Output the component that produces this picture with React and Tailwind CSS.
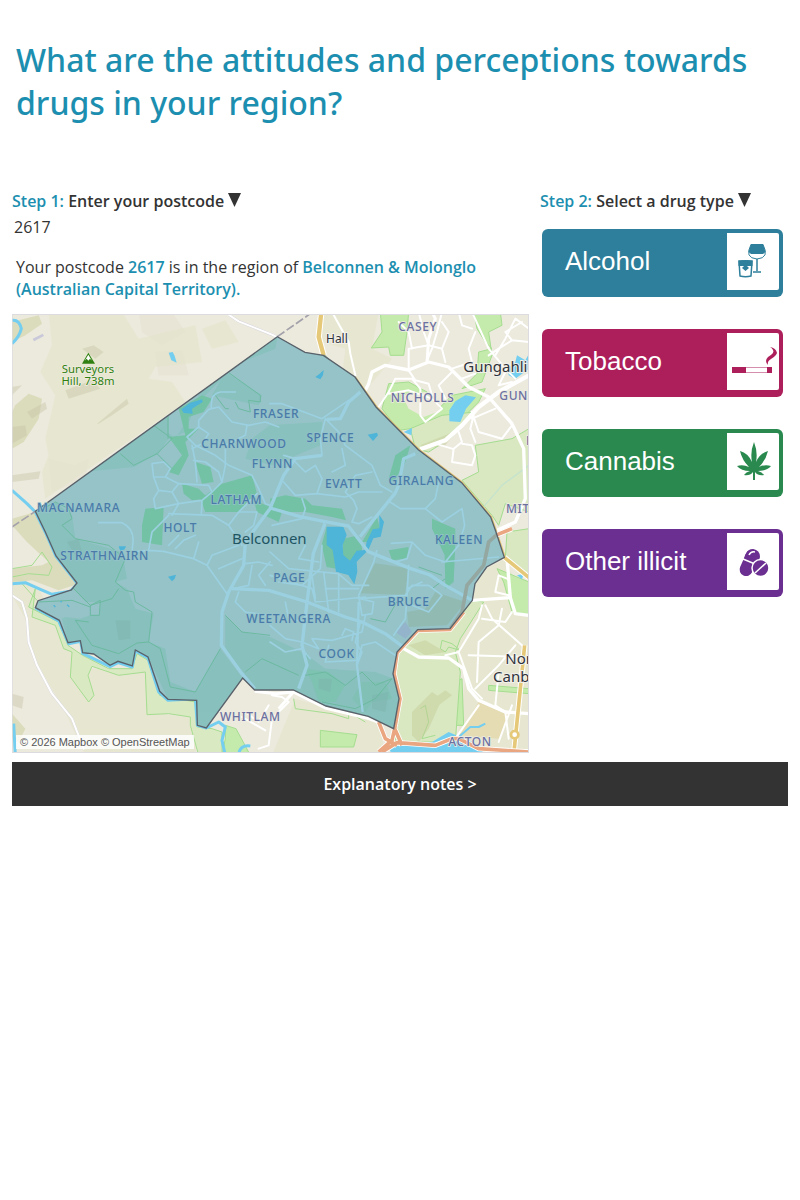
import React, { useState } from 'react'

const regionPath =
  'M70 598 L796 74 L879 121 L934 130 L1029 195 L1092 285 L1219 413 L1349 512 L1436 615 L1452 660 L1477 736 L1424 765 L1389 815 L1381 865 L1314 950 L1217 953 L1155 1020 L1143 1085 L1161 1160 L1145 1250 L1069 1213 L942 1182 L844 1134 L728 1134 L692 1098 L583 1248 L556 1240 L554 1165 L468 1162 L443 1138 L408 1035 L370 1014 L361 1062 L318 1048 L294 1060 L245 1026 L212 1022 L205 986 L168 992 L142 925 L70 887 L78 866 L178 834 L195 813 L132 732 L100 660 Z'

const suburbs = [
  ['CASEY', 1217, 57], ['NICHOLLS', 1232, 269], ['GUNGAHLIN', 1462, 264, 'start'],
  ['MITCHELL', 1482, 602, 'start'], ['WHITLAM', 715, 1227], ['ACTON', 1374, 1302], ['FORDE', 1542, 398, 'start'],
]

const innerSuburbs = [
  ['FRASER', 792, 317], ['SPENCE', 955, 390], ['CHARNWOOD', 696, 407], ['FLYNN', 781, 467],
  ['EVATT', 995, 529], ['GIRALANG', 1228, 520], ['LATHAM', 673, 577], ['MACNAMARA', 200, 601],
  ['HOLT', 505, 661], ['STRATHNAIRN', 278, 745], ['KALEEN', 1341, 697], ['PAGE', 832, 810],
  ['BRUCE', 1190, 882], ['WEETANGERA', 830, 932], ['COOK', 974, 1038],
]

// land, woodland and parks outside of the region
const Land = () => <>
  <rect x="0" y="0" width="1551" height="1330" fill="#ece9dd" />
  <g fill="#e7e7d1">
    <path d="M110 0 L330 0 L380 80 L550 40 L570 150 L430 165 L410 200 L480 210 L520 270 L100 560 L90 480 L110 430 L100 380 L130 250 L85 180 L120 100 Z" />
    <path d="M570 50 L640 25 L680 90 L600 110 Z" />
    <path d="M930 0 L1100 0 L1080 110 L1140 140 L1040 260 L990 190 L1000 110 L930 90 Z" />
    <path d="M240 1070 L400 1080 L410 1200 L560 1220 L550 1330 L220 1330 L150 1180 L70 1050 L40 920 L0 850 L0 780 L80 830 L170 1000 Z" />
    <path d="M850 1160 L1100 1230 L1120 1330 L780 1330 Z" />
    <path d="M1400 780 L1480 740 L1551 900 L1551 1330 L1330 1330 L1360 1100 L1320 1000 Z" />
  </g>
  <g fill="#d5d7ae" opacity=".7">
    <path d="M10 280 L50 245 L90 260 L80 320 L35 390 L0 410 L0 300 Z" />
    <path d="M0 30 L80 10 L90 35 L40 70 L0 90 Z" />
    <path d="M0 620 L70 600 L130 730 L200 815 L140 835 L60 805 L0 810 L0 770 L90 760 L110 750 L45 690 L0 640 Z" />
    <path d="M0 1205 L40 1250 L20 1290 L0 1280 Z" />
  </g>
  <g fill="#c9c8aa" opacity=".45">
    <path d="M45 300 L100 270 L105 290 L60 320 Z" />
    <path d="M160 235 L240 205 L265 230 L170 260 Z" />
    <path d="M255 335 L345 260 L350 275 L300 310 L260 335 Z" />
    <path d="M0 345 L40 340 L45 370 L0 395 Z" />
    <path d="M210 110 L245 100 L275 120 L250 140 Z" />
    <path d="M0 490 L85 478 L80 500 L0 510 Z" />
    <path d="M0 225 L30 220 L0 250 Z" />
    <path d="M0 1145 L35 1155 L30 1190 L0 1180 Z" />
  </g>
  <g fill="#e3e0cc" opacity=".4">
    <path d="M380 0 L480 0 L520 60 L450 100 L390 60 Z" />
    <path d="M430 120 L510 115 L530 190 L440 190 Z" />
    <path d="M110 440 L190 460 L230 440 L220 500 L120 540 Z" />
  </g>
  {/* river corridor to the west */}
  <path d="M70 830 L50 885 L140 930 L168 1000 L212 1030 L290 1070 L360 1070 L375 1025 L408 1045 L443 1150 L550 1170 L556 1245 L600 1250 L630 1260 L630 1330 L560 1330 L535 1240 L535 1215 L470 1205 L405 1208 L400 1080 L320 1090 L240 1063 L228 1090 L246 1150 L230 1170 L175 1095 L180 1020 L155 1010 L130 940 L60 915 Z" fill="#d9e9c2" stroke="#a5dd90" strokeWidth="3" />
  <path d="M0 795 L50 785 L110 790 L120 765 L90 720 L60 760 L0 770 M30 815 L75 865" fill="none" stroke="#a5dd90" strokeWidth="3" />
  <g fill="#c5ebac" stroke="#a5dd90" strokeWidth="3">
    <path d="M1105 0 L1190 0 L1185 60 L1175 130 L1135 130 L1130 105 L1078 108 L1110 60 Z" />
    <path d="M1385 0 L1465 0 L1470 40 L1430 60 L1440 130 L1410 210 L1350 230 L1395 185 L1400 120 L1440 110 L1420 90 L1395 50 Z" />
    <path d="M1130 215 L1190 210 L1245 240 L1280 290 L1320 250 L1420 230 L1400 270 L1340 330 L1160 355 L1110 290 Z" />
    <path d="M640 1240 L672 1250 L715 1330 L630 1330 L640 1280 Z" />
    <path d="M925 1255 L1035 1268 L1025 1305 L925 1305 Z" />
    <path d="M1455 770 L1551 810 L1551 910 L1500 900 L1475 810 Z" />
    <path d="M1430 1120 L1551 1130 L1551 1145 L1430 1135 Z" />
    <path d="M1270 1140 L1350 1100 L1355 1240 L1270 1240 Z" />
  </g>
  <path d="M1170 250 L1240 240 L1290 295 L1235 315 L1190 290 Z" fill="#ece9dd" />
  <g fill="#d9e8c1" stroke="#a5dd90" strokeWidth="3">
    <path d="M1195 350 L1290 310 L1390 300 L1320 375 L1250 420 L1210 410 Z" />
    <path d="M1390 400 L1500 380 L1551 350 L1551 600 L1480 575 L1460 640 L1440 610 L1350 505 L1400 480 Z" />
    <path d="M1415 870 L1380 865 L1315 955 L1220 960 L1160 1025 L1146 1085 L1165 1160 L1150 1290 L1330 1290 L1345 1080 L1330 1020 L1345 980 Z" />
    <path d="M1485 660 L1551 650 L1551 800 L1480 740 Z" />
  </g>
  <g fill="none" stroke="#a5dd90" strokeWidth="3">
    <path d="M845 1160 L850 1190 L960 1205 L1010 1220 L1010 1200 L1060 1230" />
    <path d="M1290 985 L1320 995 L1345 1015 L1310 1005 L1300 1020 L1285 1010 Z" />
    <path d="M1225 1190 L1240 1180 L1250 1230 L1230 1280 L1270 1270" />
  </g>
  <g fill="#c4ca96" opacity=".45">
    <path d="M1190 1000 L1240 985 L1300 1020 L1240 1030 Z" />
    <path d="M1200 1200 L1260 1140 L1290 1160 L1250 1250 L1220 1290 L1200 1270 Z" />
    <path d="M1265 1160 L1300 1135 L1320 1150 L1280 1180 Z" />
    <path d="M1225 400 L1300 370 L1340 350 L1300 400 L1240 410 Z" />
  </g>
  <path d="M1400 1170 L1490 1210 L1460 1280 L1340 1270 Z" fill="#e5dcb4" />
  <path d="M62 80 L92 65 L96 72 L66 88 Z" fill="#c9c9da" />
  {/* water */}
  <g fill="#73cef0">
    <path d="M1312 328 L1312 295 L1330 268 L1360 250 L1392 256 L1362 290 L1345 330 Z" />
    <path d="M1488 170 L1510 150 L1515 130 L1540 145 L1551 125 L1551 170 L1510 200 L1490 190 Z" />
    <path d="M1175 360 L1200 348 L1198 370 Z" />
    <path d="M470 122 L482 120 L488 132 L494 152 L478 145 Z" />
    <path d="M1130 1305 L1260 1290 L1310 1260 L1380 1290 L1420 1310 L1400 1330 L1140 1330 Z" />
    <path d="M1515 790 L1535 785 L1530 802 Z" />
  </g>
  <g fill="none" stroke="#73cef0" strokeWidth="9" strokeLinejoin="round">
    <path d="M0 25 Q22 22 28 50 Q22 75 0 95" />
    <path d="M0 535 L45 575 L70 600 L102 665 L132 733 L196 815 L175 838 L120 847 L80 830 L40 812 L0 815" />
    <path d="M70 888 L140 927 L170 995 L206 988 L212 1024 L294 1064 L318 1052 L361 1065 L370 1016 L408 1038 L440 1140 L468 1165 L550 1160 L556 1240 L583 1248 L620 1230 L640 1245 L630 1285 L640 1330 M680 1325 Q685 1298 715 1302" />
    <path d="M5 1235 L10 1330" />
    <path d="M1340 1275 L1375 1245 L1400 1245 L1420 1235" strokeWidth="6" />
    <path d="M1410 590 L1470 520 L1551 460" stroke="#c5e3cd" strokeWidth="4" />
  </g>
</>

// everything that shows through the shaded region
const InnerFeatures = () => <>
  <g fill="#88c1bd">
    <path d="M0 500 L340 400 L470 310 L470 375 L440 425 L370 460 L320 410 L340 380 L430 330 L490 380 L560 270 L700 130 L796 74 L790 110 L640 170 L560 250 L520 360 L470 380 L430 430 L365 465 Z" />
    <path d="M70 598 L130 570 L180 610 L190 680 L330 720 L345 800 L310 810 L345 830 L370 890 L425 905 L410 990 L460 1010 L475 1110 L550 1140 L690 1095 L583 1248 L556 1240 L554 1165 L468 1162 L408 1035 L370 1014 L361 1062 L294 1060 L212 1022 L168 992 L150 920 L230 880 L200 840 L230 880 L165 810 Z" />
    <path d="M625 1010 L550 1140 L583 1248 L692 1098 Z" />
    <path d="M640 910 L690 960 L774 975 L850 1010 L885 1030 L940 1070 L1090 1080 L1145 1100 L1161 1160 L1145 1250 L942 1182 L844 1134 L728 1134 L640 1020 Z" />
    <path d="M640 180 L750 250 L740 280 L600 250 Z" />
    <path d="M774 340 L930 330 L925 400 L780 460 L700 440 L720 380 Z" />
  </g>
  <g fill="#74c2a5">
    <path d="M500 290 L570 250 L600 260 L575 300 L530 315 L530 350 L560 350 L520 390 L530 430 L500 490 L470 480 L510 430 L470 375 L520 370 Z" />
    <path d="M550 450 L595 465 L605 510 L570 515 Z" />
    <path d="M510 515 L560 530 L590 560 L540 565 L515 545 Z" />
    <path d="M565 560 L630 515 L720 490 L735 545 L680 600 L580 600 Z" />
    <path d="M400 590 L455 585 L450 700 L390 690 L390 640 Z" />
    <path d="M774 560 L820 550 L880 560 L900 580 L990 590 L1002 625 L960 615 L880 600 L780 600 Z" />
    <path d="M1130 500 L1150 430 L1195 400 L1180 450 L1145 510 Z" />
    <path d="M1260 620 L1330 650 L1330 700 L1325 810 L1300 830 L1298 730 L1260 650 Z" />
    <path d="M1130 715 L1190 705 L1185 740 L1140 745 Z" />
    <path d="M720 545 L740 570 L810 600 L800 630 L735 600 Z" />
    <path d="M929 699 L944 644 L965 714 L972 770 L944 765 Z" />
    <path d="M994 680 L1030 672 L1048 690 L1050 715 L1014 750 L990 735 Z" />
    <path d="M1050 690 L1095 615 L1104 650 L1070 690 Z" />
    <path d="M880 1070 L950 1080 L1000 1120 L970 1170 L920 1170 L900 1110 Z" opacity=".4" />
    <path d="M1050 1110 L1120 1110 L1140 1160 L1080 1170 L1060 1200 L1020 1160 Z" opacity=".35" />
  </g>
  <g fill="#91bab3">
    <path d="M1089 754 L1189 769 L1179 849 L1044 844 Z" />
    <path d="M1270 840 L1360 870 L1305 940 L1190 945 L1185 900 L1240 890 Z" />
  </g>
  <path d="M1150 960 L1180 930 L1200 960 L1180 980 Z" fill="#94b4cb" />
  <path d="M80 880 L120 860 L200 870 L265 870 L262 910 L235 910 L205 920 L160 915 Z" fill="#95c3c8" />
  <g fill="#7bafa9" opacity=".35">
    <path d="M310 925 L355 925 L355 980 L320 985 Z" />
    <path d="M920 1100 L960 1100 L955 1140 L920 1130 Z" />
    <path d="M165 690 L200 680 L215 740 L190 730 Z" />
    <path d="M1080 1150 L1130 1140 L1120 1200 L1080 1190 Z" />
  </g>
  <g fill="none" stroke="#6cb9a0" strokeWidth="3">
    <path d="M650 182 L745 250 L745 270 L710 265 L715 300 L680 290 L670 270 M610 250 L640 290 L650 290" />
    <path d="M325 425 L365 460 L435 425 L480 380 L425 340 M435 425 L480 470 M468 310 L468 380" />
    <path d="M75 600 L130 570 L170 590 L180 620 L150 640 L190 680 L290 700 L340 740 L310 810 L340 835 L365 840 L370 870 L420 900 L410 990 M410 990 L375 993 L320 1025 L240 1000 L190 925 L230 930 M410 990 L445 1010 L475 1125 L550 1140 L625 1010 M165 810 L235 880 L300 860 L320 830" />
    <path d="M235 880 L265 865 L262 910 L235 910 Z" />
    <path d="M80 870 L180 865 L235 885 M640 910 L690 960 L774 970 M1075 920 L1120 930 L1160 860 M885 1025 L880 1090 L940 1080 L1000 1120 L1050 1080 L1090 1120 L1140 1100 L1090 1160 L1030 1190 L930 1170 M700 1080 L750 1040 L860 1090" />
    <path d="M1220 765 L1290 790 M1260 830 L1300 800" />
  </g>
  <g fill="#4eb4d8">
    <path d="M508 292 L535 272 L570 262 L572 270 L540 290 L542 305 L515 303 Z" />
    <path d="M910 195 L922 186 L935 174 L933 190 L925 202 Z" />
    <path d="M1067 368 L1095 362 L1098 370 L1083 387 Z" />
    <path d="M944 644 L994 644 L1004 669 L992 699 L994 729 L1014 746 L1034 716 L1059 714 L1064 689 L1082 652 L1102 649 L1102 609 L1116 629 L1106 674 L1084 679 L1069 714 L1034 749 L1036 779 L1027 817 L1009 789 L972 779 L962 714 L944 699 Z" />
    <path d="M320 703 L342 703 L338 712 L325 718 Z" />
    <path d="M468 794 L492 788 L488 800 L480 808 Z" />
  </g>
  <path d="M125 880 L130 885 M145 870 L150 868 M165 878 L172 884" stroke="#4eb4d8" strokeWidth="4" />
  <g fill="none" stroke="#9bd0e1" strokeWidth="5" strokeLinejoin="round" strokeLinecap="round">
    <path d="M598 287 Q595 245 625 240 L670 240 M590 292 L620 285 L660 330 L710 340 L760 330 L800 345 M590 292 L560 325 L560 345 L525 375 L550 400 L610 430 L650 460 L720 490 L740 530 L760 575 L774 580" />
    <path d="M560 345 L590 365 L570 395 L540 410 M705 340 L700 370 L640 400 L640 460 L630 510 L600 540 L570 565 L500 575 L430 590 L425 560 L440 535 L425 495 L420 455 L455 450 L475 470 L460 495 L430 495 M540 400 L550 450 L555 510 M545 445 L580 450 L620 480 L630 510 M460 495 L500 515 L590 520 L600 540 M500 515 L480 540 L500 575 L480 610 M440 535 L480 540 M570 565 L568 605" />
    <path d="M774 275 L810 275 L930 320 L1010 265 M940 320 L925 380 L930 430 L850 440 L815 430 M940 320 L980 360 L1000 400 L1080 460 L1105 520 L1140 540 M990 410 L1000 460 L960 480 M1080 480 L1030 490 L1000 540 L1025 565 L1035 590 L1020 630 L1040 635 L1080 615 M850 450 L880 480 L910 460 L930 500 L915 545 L850 550 L815 510 M915 545 L1000 555 L1040 540 L1110 540" />
    <path d="M260 632 L330 632 Q370 650 362 700 L360 720 L410 715 M410 715 L420 660 L470 610 M470 700 L500 670 M410 715 L455 718 L545 740 L585 760 L645 845 M490 710 L515 685 L550 670 M585 760 L600 730 L680 700 M620 770 L690 740 M545 740 L560 690 M700 755 L740 750 L780 760 M665 830 L710 820 L720 760 M774 750 L740 790 L760 820 M680 840 L670 870 L700 900 L770 910" />
    <path d="M470 605 L600 610 L650 640 L690 700 M650 640 L680 600 L735 600 L725 640 L700 660 M735 545 L700 580 L680 600 M880 590 L870 620 L780 640 M870 560 L880 590" />
    <path d="M1134 570 L1165 590 L1240 590 L1290 630 L1350 590 L1358 640 L1340 700 M1280 510 L1270 560 L1240 590 M1138 694 L1200 690 L1240 730 L1300 750 L1340 700 M1200 692 L1185 740 L1150 750 M1290 750 L1460 735" />
    <path d="M774 720 L830 770 L930 780 L979 785 L1020 820 L1070 820 M774 790 L900 830 L910 870 L1060 855 M900 790 L910 860 M935 780 L950 900 M980 785 L980 900 M940 830 L1040 830 M1094 716 L1085 750 L1040 850 L1050 910 L1080 905 L1085 870 L1045 860 M1040 860 L1180 850 L1200 820 L1250 820 L1290 850 L1250 900 L1200 880 M1190 760 L1185 850 L1180 920 L1145 970 M930 700 L925 770 L870 820 L800 810 M880 700 L860 740 L920 750 M1185 830 L1230 810" />
    <path d="M774 940 L820 980 L870 990 L920 1010 L900 980 L960 985 L1050 960 L1060 910 M1045 930 L1030 990 L1050 1020 L1035 1060 L1050 1000 L1090 990 L1150 1030 M990 970 L1000 950 L1025 960 L1020 985 M950 1000 L940 1050 L1030 1045 M774 990 L820 1020 L870 1010 L895 1040 M820 870 L830 920 L880 930" />
  </g>
  <g fill="none" stroke="#9bd0e1" strokeWidth="10" strokeLinejoin="round">
    <path d="M1045 240 L1010 270 L985 320 L945 322 M930 430 L850 440 L815 490 L774 590 L700 690 L695 760 L650 840 L630 900 L628 1000 L690 1085 L728 1130" />
    <path d="M774 588 L864 614 L939 629 L1009 642 L1069 719 L1194 769 L1254 789 L1300 820 L1381 865" />
    <path d="M1210 425 L1175 440 L1160 520 L1149 544 L1084 624 L1044 674" />
    <path d="M660 830 L770 835 L885 870 L1000 915 L1050 930 L1120 965 L1180 1010" />
    <path d="M939 634 L904 724 L884 880 L870 1000 L885 1060 L860 1130" />
  </g>
  <path d="M1040 870 L1035 1060 L1052 1200" fill="none" stroke="#9bd0e1" strokeWidth="7" />
  <path d="M1475 650 L1430 690 L1415 760 L1365 820 L1350 900 L1315 950" fill="none" stroke="#94a7a0" strokeWidth="11" />
</>

const OuterRoads = () => <>
  <g fill="none" stroke="#d6d4dd" strokeWidth="8" strokeLinejoin="round">
    <path d="M650 8 L680 28 L780 68 L800 78" />
    <path d="M0 850 L30 870 L45 920 L50 990 L75 1060 L120 1145 L180 1220 L215 1310" />
  </g>
  <g fill="none" stroke="#fff" strokeWidth="6" strokeLinejoin="round" strokeLinecap="round">
    <path d="M650 8 L680 28 L780 68 L800 78 M0 850 L30 870 L45 920 L50 990 L75 1060 L120 1145 L180 1220 L215 1310" />
    <path d="M960 0 L1010 90 L1015 125 L1030 190 M1100 285 L1130 240 L1150 200 L1200 200 L1225 230 L1225 310 L1240 330 L1290 290 L1260 260 L1190 235 L1130 245 M1190 175 L1210 205 L1250 215 L1260 250 M1190 170 L1190 110 L1250 100 L1290 110 L1300 150 M1290 0 L1275 60 L1260 110 L1245 145 M1220 0 L1235 60 L1250 100 M1200 110 L1190 60 L1160 30 M1290 110 L1310 60 L1290 30 M1340 0 L1350 40 L1380 50 M1320 170 L1380 150 L1370 110 L1390 60 M1320 180 L1280 220 L1300 260 M1350 200 L1390 185 M1380 0 L1430 110 L1480 170 L1510 200 M1430 130 L1460 110 L1500 85 L1551 90 M1450 130 L1480 80 L1510 20 L1551 50 M1500 85 L1480 60 L1530 30 M1480 180 L1460 220 L1500 210" />
    <path d="M1340 360 L1350 390 L1325 410 L1320 450 L1380 460 L1390 430 L1380 400 L1350 395 M1270 395 L1320 410 M1380 300 L1400 360 L1470 380 L1500 340 L1490 320 M1385 310 L1375 350 L1390 390 M1450 290 L1380 320" />
    <path d="M1410 880 L1400 920 L1340 1020 L1380 1130 L1410 1160 M1420 880 L1440 920 L1530 1000 M1410 920 L1480 930 L1500 900 M1470 890 L1460 940 L1400 990 L1395 1110 M1370 1030 L1551 1035 M1340 1020 L1300 1030 M1390 1130 L1460 1060 L1510 1000 M1460 1080 L1450 1180 L1480 1200 L1490 1280 M1400 1180 L1330 1280 M1500 1180 L1460 1290 M1450 840 L1460 790 L1485 800 M1450 840 L1490 850" />
    <path d="M780 1150 L810 1155 L830 1170 L780 1220 L770 1300 L740 1310 M700 1200 L740 1230 L770 1180 M690 1215 L760 1255" />
  </g>
  <g fill="none" stroke="#fff" strokeWidth="13" strokeLinejoin="round">
    <path d="M1060 235 L1070 215 L1080 180 L1120 160 L1190 174 L1250 150 L1310 165 L1370 225 L1430 255 L1500 335 L1535 410 L1540 560 L1510 630 L1455 655" strokeWidth="10" />
    <path d="M1225 412 L1300 385 L1350 340 L1400 285 L1460 240 L1551 190" />
    <path d="M1381 865 L1495 857 L1485 740 M1495 857 L1510 905 L1551 910" strokeWidth="10" />
    <path d="M1175 1010 L1220 1035 L1310 1038 L1355 1070 L1370 1130 L1400 1165 L1480 1200 L1551 1205" strokeWidth="10" />
    <path d="M844 1140 L800 1190 M728 1138 L790 1145 L844 1140 L940 1188 L1070 1220 L1110 1235" strokeWidth="9" />
    <path d="M1245 150 L1250 80 L1270 20 L1260 0" strokeWidth="9" />
  </g>
  <g fill="none" strokeLinejoin="round">
    <path d="M928 0 L920 75 L935 130" stroke="#fff" strokeWidth="19" />
    <path d="M928 0 L920 75 L935 130" stroke="#e5c878" strokeWidth="13" />
    <path d="M935 130 L970 165 L1029 198" stroke="#8fae8f" strokeWidth="8" />
    <path d="M1029 198 L1092 285 L1219 413 L1349 512 L1436 615 L1452 660 L1477 736" stroke="#e5c878" strokeWidth="9" />
    <path d="M1477 736 L1551 797 M1538 1000 L1505 1330" stroke="#fff" strokeWidth="17" />
    <path d="M1477 736 L1551 797 M1538 1000 L1505 1330" stroke="#e5c878" strokeWidth="11" />
    <circle cx="1508" cy="1268" r="11" fill="#fff" stroke="#e5c878" strokeWidth="8" />
    <path d="M1450 670 L1500 650 M1355 900 L1314 952 L1217 955 L1155 1022 L1146 1085 L1164 1160 L1148 1250 L1170 1300 M1100 1230 L1120 1280 L1155 1300 M1148 1250 L1140 1285 L1100 1320 M1110 1320 L1155 1292 L1270 1300 L1320 1280 L1340 1280 L1400 1310 L1551 1320" stroke="#fff" strokeWidth="16" />
    <path d="M1450 670 L1500 650 M1355 900 L1314 952 L1217 955 L1155 1022 L1146 1085 L1164 1160 L1148 1250 L1170 1300 M1100 1230 L1120 1280 L1155 1300 M1148 1250 L1140 1285 L1100 1320 M1110 1320 L1155 1292 L1270 1300 L1320 1280 L1340 1280 L1400 1310 L1551 1320" stroke="#e9a680" strokeWidth="11" />
  </g>
  <path d="M0 645 L70 598 M796 74 L895 5" stroke="#a3a1aa" strokeWidth="5" strokeDasharray="26 8" />
</>

const RegionMap = () => {
  return <svg viewBox="0 6 1551 1317" className="block h-auto w-full" role="img" aria-label="Map of Belconnen and Molonglo">
    <Land />
    <path d={regionPath} fill="#95c3c8" />
    <clipPath id="region"><path d={regionPath} /></clipPath>
    <OuterRoads />
    <path d={regionPath} fill="#95c3c8" />
    <g clipPath="url(#region)"><InnerFeatures /></g>
    <path d={regionPath} fill="none" stroke="#59616a" strokeWidth="4" />

    <g className="font-['Noto_Sans'] text-[36px] font-medium tracking-wider" textAnchor="middle" paintOrder="stroke" strokeWidth="4">
      <g fill="#6b70a0" stroke="#eeece4">
        {suburbs.map(([name, x, y, anchor]) => <text key={name} x={x} y={y} textAnchor={anchor}>{name}</text>)}
      </g>
      <g fill="#4a7ba8" stroke="#95c3cc">
        {innerSuburbs.map(([name, x, y]) => <text key={name} x={x} y={y}>{name}</text>)}
      </g>
    </g>
    <g className="font-['Noto_Sans'] text-[45px]" fill="#2f333b" stroke="#f2f0ea" strokeWidth="6" paintOrder="stroke">
      <text x="1354" y="181">Gungahlin</text>
      <text x="1480" y="1055">North</text>
      <text x="1443" y="1111">Canberra</text>
      <text x="942" y="92" className="text-[36px]">Hall</text>
      <text x="772" y="696" textAnchor="middle" fill="#1f5561" stroke="#95c3cc">Belconnen</text>
    </g>
    <g className="font-['Noto_Sans'] text-[34px]" fill="#2f8010" stroke="#eeebdd" strokeWidth="5" paintOrder="stroke" textAnchor="middle">
      <text x="228" y="182">Surveyors</text>
      <text x="228" y="219">Hill, 738m</text>
    </g>
    <path d="M210 155 L229 122 L249 155 Z" fill="#2f8010" />
    <path d="M218 146 L229 128 L240 146 L234 140 L229 146 L224 140 Z" fill="#fff" />
    <path d="M0 1323 V7 H1550 V1322 H0" fill="none" stroke="#dcdce0" strokeWidth="4" />
  </svg>
}

const AlcoholIcon = () => (
  <svg viewBox="0 0 52 57" className="h-[57px] w-[52px]" fill="none" stroke="currentColor">
    <path d="M24 11.500 H36 Q43 25 30 26 Q17 25 24 11.500 Z" fill="#fff" strokeWidth="1" />
    <path d="M24 11 H36 L38.500 19 L36 21 H24 L21.500 19 Z" fill="currentColor" stroke="none" />
    <path d="M30 26 V38 M26 39 H34" strokeWidth="1.500" />
    <path d="M12 28 L13 43 Q18.500 44.500 24 43 L25 28 Z" fill="#fff" strokeWidth="1.500" />
    <path d="M11.500 28 Q18.500 26 25.500 28 V33 H20 L22 35 L18.500 38 L15 35 L17 33 H11.500 Z" fill="currentColor" stroke="none" />
  </svg>
)

const TobaccoIcon = () => (
  <svg viewBox="0 0 52 57" className="h-[57px] w-[52px]">
    <rect x="5.500" y="34.500" width="39" height="5" fill="#fff" stroke="currentColor" strokeWidth="1" opacity=".5" />
    <path d="M5 34 H19 V40 H5 Z M40 34 H45 V40 H40 Z" fill="currentColor" />
    <path d="M43 14 Q49 15 50 20 Q49 23 44 26 Q40 28 41 32 Q37 28 41 24 Q48 20 46 17 Q45 15 43 14 Z" fill="currentColor" />
  </svg>
)

const CannabisIcon = () => (
  <svg viewBox="0 0 52 57" className="h-[57px] w-[52px]" fill="currentColor">
    <path d="M27 9 Q31 19 29 29 Q33 20 41 18 Q39 27 32 34 Q38 31 44 33 Q40 38 31 38 Q35 39 37 42 Q31 43 28 39 V47 H26 V39 Q23 43 17 42 Q19 39 23 38 Q14 38 10 33 Q16 31 22 34 Q15 27 13 18 Q21 20 25 29 Q23 19 27 9 Z" />
  </svg>
)

const IllicitIcon = () => (
  <svg viewBox="0 0 52 57" className="h-[57px] w-[52px]" fill="currentColor">
    <g transform="rotate(24 23 29)">
      <rect x="16" y="16" width="13" height="28" rx="6.500" />
    </g>
    <path d="M17 26 Q19 16 26 16 Q33 17 33 24 L31 31 Z" />
    <path d="M16 26 L28 31 M22 22 Q24 18 28 19" fill="none" stroke="#fff" strokeWidth="1.500" />
    <circle cx="33.500" cy="35" r="8.500" stroke="#fff" strokeWidth="1.500" />
    <path d="M28 40 L39 30" stroke="#fff" strokeWidth="1.500" />
  </svg>
)

const drugs = [
  { name: 'Alcohol', Icon: AlcoholIcon, bg: 'bg-[#2e7f9b]', text: 'text-[#2e7f9b]' },
  { name: 'Tobacco', Icon: TobaccoIcon, bg: 'bg-[#ad1f5b]', text: 'text-[#ad1f5b]' },
  { name: 'Cannabis', Icon: CannabisIcon, bg: 'bg-[#29894f]', text: 'text-[#29894f]' },
  { name: 'Other illicit', Icon: IllicitIcon, bg: 'bg-[#6a2f91]', text: 'text-[#6a2f91]' },
]

const DrugButton = ({ name, Icon, bg, text }) => (
  <button type="button" className={`flex h-[68px] w-full items-center justify-between rounded-md pr-1 pl-[23px] ${bg}`}>
    <span className="pb-1 font-['Liberation_Sans'] text-[26px] text-white">{name}</span>
    <span className={`mb-1 rounded-r-xs bg-white ${text}`}><Icon /></span>
  </button>
)

const DownArrow = () => (
  <svg viewBox="0 0 13 14" className="inline-block h-[14px] w-[13px] align-baseline" fill="#333"><path d="M0 0 H13 L6.500 14 Z" /></svg>
)

const App = () => {
  let [postcode, setPostcode] = useState('2617')

  return <div className="bg-white px-3 pt-[38px] font-['Open_Sans',sans-serif] text-[#333]">
    <h1 className="pl-1 font-['Noto_Sans',sans-serif] text-[32px] leading-[43px] font-medium text-[#1c8fb0]">
      What are the attitudes and perceptions towards drugs in your region?
    </h1>

    <div className="mt-[65px] flex gap-[11px]">
      <section className="min-w-0 flex-1">
        <label htmlFor="postcode" className="block text-[16px] leading-6 font-semibold">
          <span className="text-[#1c8fb0]">Step 1:</span> Enter your postcode <DownArrow />
        </label>
        <input id="postcode" value={postcode} onChange={e => setPostcode(e.target.value)}
          className="block h-7 w-full px-0.5 text-[16px] outline-none" />
        <p className="mt-[15px] mb-[14px] px-1 text-[16px] leading-[22px]">
          Your postcode <b className="font-semibold text-[#1c8fb0]">2617</b> is in the region of <b className="font-semibold text-[#1c8fb0]">Belconnen &amp; Molonglo (Australian Capital Territory).</b>
        </p>
        <div className="relative">
          <RegionMap />
          <div className="absolute bottom-1 left-1 bg-white/80 px-1 font-['Liberation_Sans'] text-[11px] leading-[14px] text-[#555]">
            © 2026 Mapbox © OpenStreetMap
          </div>
        </div>
      </section>

      <section className="w-[248px] shrink-0">
        <h2 className="text-[16px] leading-6 font-semibold">
          <span className="text-[#1c8fb0]">Step 2:</span> Select a drug type <DownArrow />
        </h2>
        <div className="mt-4 flex flex-col gap-8 pr-[5px] pl-0.5">
          {drugs.map(d => <DrugButton key={d.name} {...d} />)}
        </div>
      </section>
    </div>

    <button type="button" className="mt-[9px] block h-11 w-full bg-[#333] text-[16px] font-semibold text-white">
      Explanatory notes &gt;
    </button>
  </div>
}

export default App
